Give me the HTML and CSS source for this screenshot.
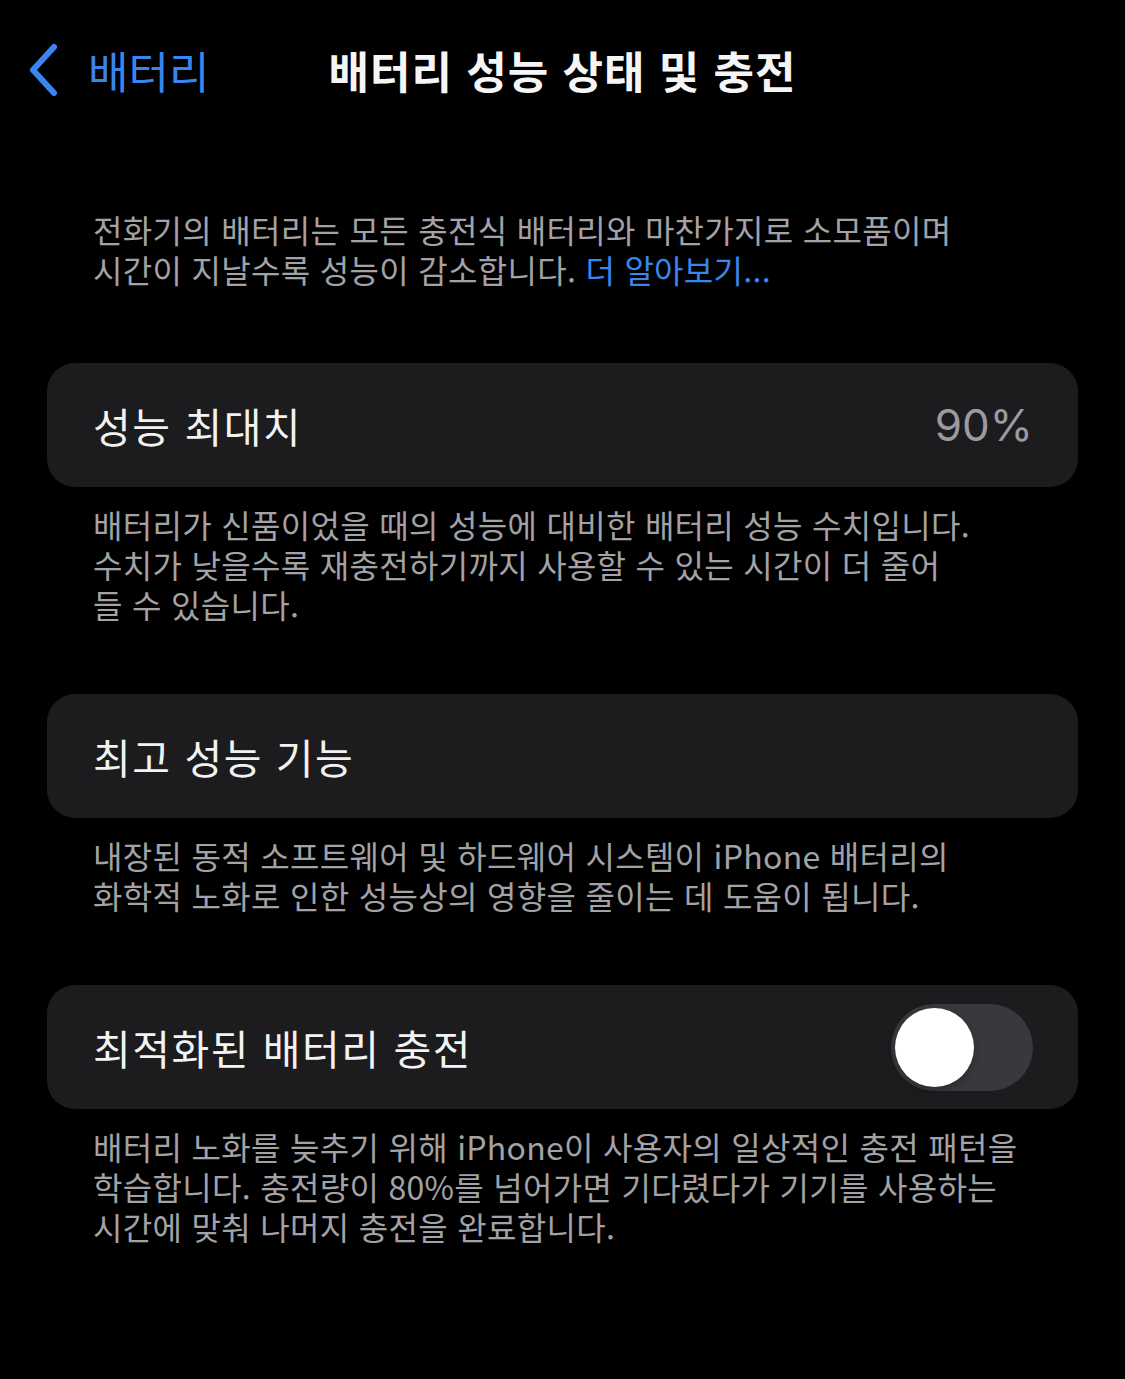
FILE: index.html
```html
<!DOCTYPE html>
<html lang="ko">
<head>
<meta charset="utf-8">
<title>배터리 성능 상태 및 충전</title>
<link rel="stylesheet" href="styles.css">
</head>
<body>
<div class="screen">
  <header class="nav">
    <a class="back" href="#">
      <svg class="chev" width="34" height="54" viewBox="0 0 34 54"><path d="M28 4 L7 27 L28 50" fill="none" stroke="currentColor" stroke-width="6" stroke-linecap="round" stroke-linejoin="round"/></svg>
      <span class="back-label">배터리</span>
    </a>
    <h1 class="title">배터리 성능 상태 및 충전</h1>
    <span class="spacer"></span>
  </header>

  <p class="note intro">전화기의 배터리는 모든 충전식 배터리와 마찬가지로 소모품이며<br>시간이 지날수록 성능이 감소합니다. <a class="link" href="#">더 알아보기...</a></p>

  <section class="group first">
    <div class="card">
      <span class="label">성능 최대치</span>
      <span class="value">90%</span>
    </div>
    <p class="note footer">배터리가 신품이었을 때의 성능에 대비한 배터리 성능 수치입니다.<br>수치가 낮을수록 재충전하기까지 사용할 수 있는 시간이 더 줄어<br>들 수 있습니다.</p>
  </section>

  <section class="group">
    <div class="card">
      <span class="label">최고 성능 기능</span>
    </div>
    <p class="note footer">내장된 동적 소프트웨어 및 하드웨어 시스템이 iPhone 배터리의<br>화학적 노화로 인한 성능상의 영향을 줄이는 데 도움이 됩니다.</p>
  </section>

  <section class="group">
    <div class="card">
      <span class="label">최적화된 배터리 충전</span>
      <span class="toggle"><span class="knob"></span></span>
    </div>
    <p class="note footer">배터리 노화를 늦추기 위해 iPhone이 사용자의 일상적인 충전 패턴을<br>학습합니다. 충전량이 80%를 넘어가면 기다렸다가 기기를 사용하는<br>시간에 맞춰 나머지 충전을 완료합니다.</p>
  </section>
</div>
</body>
</html>
```

FILE: styles.css
```css
* { box-sizing: border-box; }
html, body {
  margin: 0;
  padding: 0;
  background: #000;
}
body {
  font-family: "Noto Sans CJK KR", "Noto Sans", sans-serif;
  color: #f2f2f2;
  width: 1125px;
  min-height: 1379px;
}
.screen {
  display: flex;
  flex-direction: column;
}
.nav {
  height: 140px;
  display: grid;
  grid-template-columns: 1fr auto 1fr;
  align-items: center;
}
.back {
  display: flex;
  align-items: center;
  gap: 28px;
  padding-left: 26px;
  color: #3a86f0;
  text-decoration: none;
}
.chev { display: block; }
.back-label {
  font-size: 44px;
  line-height: 1;
  letter-spacing: 0;
}
.title {
  margin: 0;
  font-size: 44px;
  font-weight: 700;
  line-height: 1;
  letter-spacing: 1px;
  color: #f5f5f5;
}
.note {
  margin: 0;
  padding: 0 60px 0 93px;
  font-size: 32px;
  line-height: 40px;
  color: #a2a2a7;
  letter-spacing: 0.3px;
  white-space: nowrap;
}
.intro { margin-top: 69px; }
.link { color: #3a86f0; text-decoration: none; }
.group { margin-top: 70px; }
.group.first { margin-top: 74px; }
.card {
  margin: 0 47px;
  height: 124px;
  background: #1c1c1e;
  border-radius: 28px;
  display: flex;
  align-items: center;
  justify-content: space-between;
  padding: 0 45px 0 46px;
}
.label {
  font-size: 41px;
  letter-spacing: 1.5px;
  color: #f2f2f2;
}
.value {
  font-size: 44px;
  color: #9a9a9f;
  font-family: "Inter", "Noto Sans", sans-serif;
  font-weight: 400;
}
.footer { margin-top: 17px; }
.toggle {
  width: 142px;
  height: 87px;
  border-radius: 44px;
  background: #39393d;
  display: flex;
  align-items: center;
  padding: 0 4px;
}
.knob {
  width: 79px;
  height: 79px;
  border-radius: 50%;
  background: #fff;
  box-shadow: 0 3px 8px rgba(0,0,0,0.25);
}
```
